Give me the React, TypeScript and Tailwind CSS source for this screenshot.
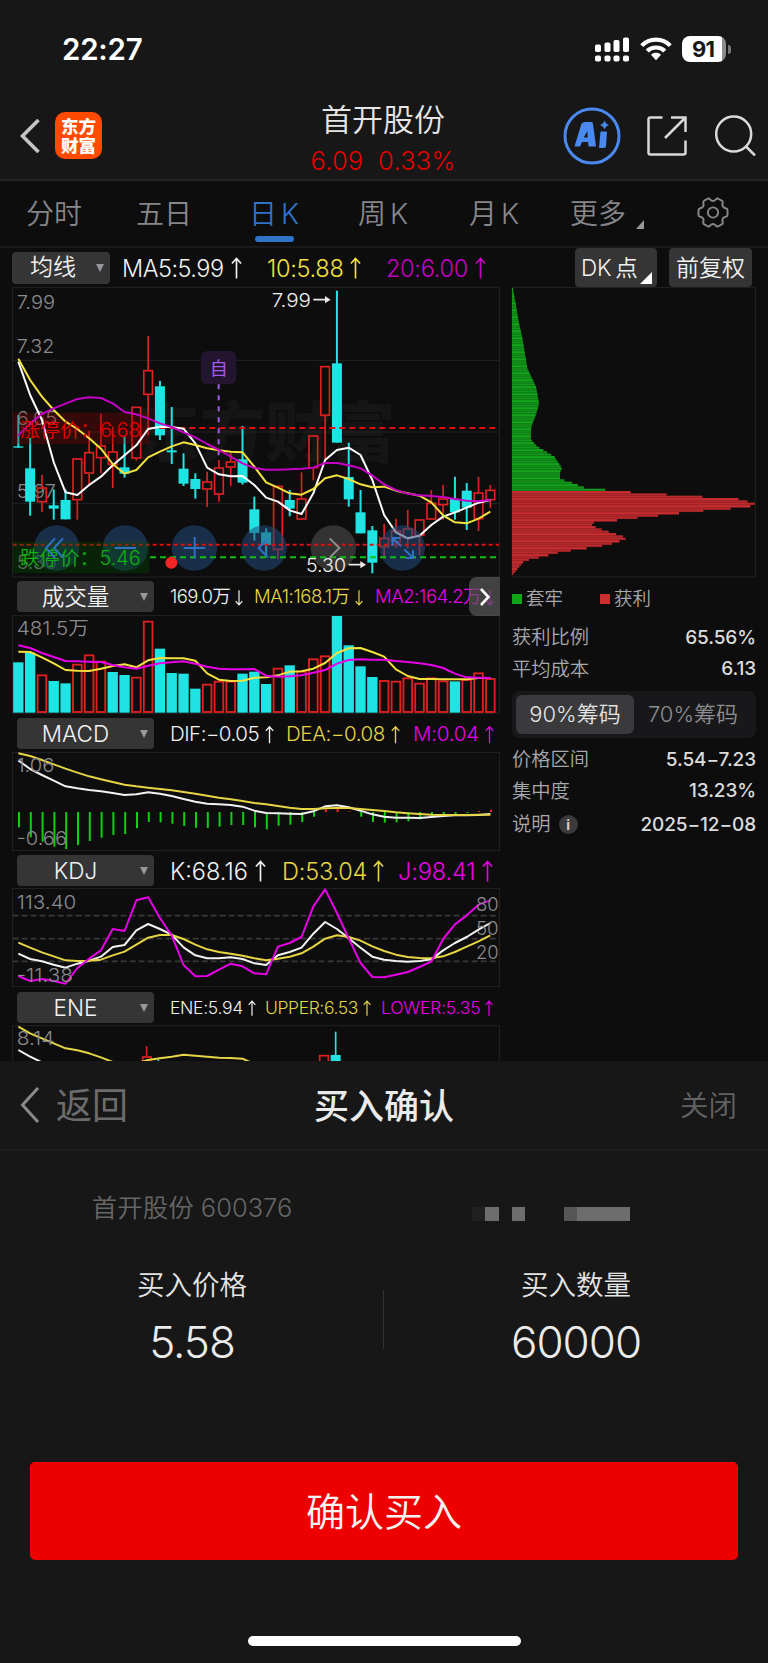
import React from "react";
import clsx from "clsx";

// chart drawings use three units per css pixel
const X0 = 55;
const STEP = 35.4;
const cx = (i: number) => X0 + i * STEP;

const CYAN = "#20e3e3";
const RED = "#e02020";
const WHITE = "#f2f2f2";
const YELLOW = "#f3e23f";
const MAGENTA = "#c400c4";
const PINK = "#e800e8";

type Candle = [string, number, number, number, number];

// direction, high, body top, body bottom, low
const candles: Candle[] = [
  ["c", 405, 499, 503, 503], ["c", 474, 565, 665, 707], ["r", 584, 622, 667, 697], ["c", 628, 676, 686, 719],
  ["c", 628, 660, 718, 718], ["r", 535, 535, 661, 719], ["r", 452, 516, 581, 612], ["r", 401, 496, 535, 580],
  ["r", 440, 514, 555, 624], ["c", 470, 562, 581, 593], ["r", 380, 380, 536, 542], ["r", 168, 270, 345, 466],
  ["c", 303, 319, 466, 480], ["c", 381, 511, 517, 552], ["c", 520, 566, 611, 618], ["c", 580, 597, 627, 656],
  ["r", 575, 604, 629, 681], ["r", 540, 562, 644, 665], ["r", 519, 544, 563, 618], ["c", 438, 538, 608, 614],
  ["c", 650, 688, 759, 782], ["c", 745, 757, 795, 830], ["r", 617, 617, 810, 838], ["c", 630, 660, 686, 709],
  ["r", 577, 655, 719, 719], ["r", 466, 466, 565, 601], ["r", 258, 258, 408, 540], ["c", 32, 250, 488, 488],
  ["c", 488, 591, 658, 680], ["c", 630, 697, 760, 760], ["c", 738, 751, 848, 880], ["r", 731, 773, 802, 835],
  ["r", 716, 752, 787, 805], ["r", 690, 745, 775, 805], ["r", 718, 718, 768, 825], ["r", 630, 668, 719, 719],
  ["r", 615, 655, 676, 719], ["c", 590, 657, 697, 719], ["c", 609, 632, 683, 750], ["r", 590, 637, 718, 753],
  ["r", 615, 629, 661, 684],
];

const ma5 = [245, 345, 420, 547, 637, 645, 615, 590, 556, 526, 496, 447, 440, 441, 446, 490, 563, 583, 589, 588, 615, 653, 665, 691, 702, 640, 540, 510, 503, 525, 600, 705, 757, 775, 767, 735, 710, 697, 683, 668, 660];
const ma10 = [236, 300, 350, 390, 425, 447, 475, 506, 552, 581, 570, 532, 515, 499, 487, 495, 505, 511, 515, 517, 560, 607, 623, 640, 644, 627, 595, 586, 597, 613, 622, 620, 632, 640, 647, 667, 706, 727, 730, 716, 695];
const ma20 = [466, 430, 402, 385, 371, 357, 352, 354, 370, 396, 403, 415, 430, 441, 457, 472, 492, 510, 530, 550, 564, 569, 569, 568, 566, 563, 549, 549, 556, 565, 587, 613, 630, 641, 646, 648, 651, 657, 662, 664, 660];

const volumes = [262, 233, 299, 318, 325, 267, 239, 258, 291, 300, 306, 138, 221, 294, 296, 341, 327, 318, 318, 296, 290, 327, 279, 271, 288, 251, 242, 123, 211, 274, 306, 316, 318, 308, 324, 308, 317, 319, 313, 293, 310];
const cyanVolumes = [0, 1, 3, 4, 8, 9, 12, 13, 14, 15, 19, 20, 21, 23, 27, 28, 29, 30, 37];
const volMa1 = [230, 231, 247, 265, 285, 287, 288, 281, 273, 268, 277, 256, 249, 250, 250, 257, 295, 314, 318, 317, 308, 307, 301, 290, 289, 281, 264, 234, 220, 219, 231, 245, 283, 303, 312, 312, 313, 313, 313, 309, 309];
const volMa2 = [211, 219, 234, 246, 258, 259, 260, 261, 270, 277, 281, 272, 265, 262, 259, 266, 275, 281, 283, 283, 282, 302, 305, 304, 301, 293, 285, 266, 255, 253, 254, 254, 258, 261, 265, 270, 279, 296, 307, 308, 309];

const macdBars = [757, 787, 800, 815, 822, 810, 798, 788, 780, 777, 760, 741, 742, 746, 753, 758, 759, 755, 750, 750, 757, 763, 752, 749, 741, 725, 703, 702, 709, 725, 741, 743, 742, 739, 733, 722, 720, 717, 714, 708, 704];
const dif = [556, 582, 600, 617, 634, 640, 645, 649, 654, 660, 658, 652, 656, 663, 672, 680, 686, 688, 690, 695, 707, 714, 715, 716, 717, 709, 694, 691, 697, 707, 718, 725, 728, 728, 729, 726, 723, 721, 721, 720, 717];
const dea = [535, 543, 555, 568, 581, 593, 604, 613, 621, 629, 634, 638, 642, 646, 651, 656, 662, 668, 673, 678, 684, 688, 693, 698, 702, 702, 700, 699, 699, 702, 705, 708, 712, 715, 717, 719, 720, 720, 720, 719, 719];

const kLine = [312, 328, 335, 345, 354, 342, 333, 321, 292, 286, 242, 223, 238, 255, 293, 317, 326, 326, 323, 328, 341, 346, 317, 307, 294, 252, 217, 238, 266, 294, 321, 330, 334, 336, 334, 329, 302, 280, 262, 240, 220];
const dLine = [279, 294, 308, 320, 332, 334, 333, 330, 317, 306, 285, 264, 256, 256, 268, 285, 299, 307, 312, 318, 326, 332, 327, 321, 311, 291, 267, 257, 262, 273, 290, 304, 315, 322, 325, 326, 320, 307, 291, 275, 257];
const jLine = [379, 394, 388, 394, 402, 355, 327, 302, 238, 244, 152, 143, 205, 258, 346, 380, 379, 360, 342, 350, 371, 374, 291, 280, 262, 170, 119, 190, 266, 340, 382, 383, 375, 367, 352, 336, 268, 224, 197, 165, 152];

// y, right edge
const chipShape = [
  [22, 38], [60, 45], [120, 55], [180, 68], [265, 82], [300, 98], [320, 108], [370, 117], [400, 109], [440, 94],
  [478, 92], [500, 112], [530, 163], [565, 186], [576, 180], [598, 180], [606, 210], [614, 230], [622, 247], [630, 320],
  [637, 397], [644, 507], [651, 615], [658, 723], [665, 744], [672, 766], [679, 750], [686, 687], [693, 604], [700, 532],
  [707, 470], [714, 408], [721, 347], [728, 277], [736, 275], [744, 292], [752, 315], [760, 340], [768, 366], [775, 380],
  [783, 360], [790, 338], [797, 310], [804, 263], [811, 215], [818, 175], [825, 147], [832, 118], [839, 88], [846, 70], [885, 37],
];

const chipEdge = (y: number) => {
  const n = chipShape.findIndex((p) => p[0] >= y);
  if (n <= 0) return chipShape[0][1];
  const [y0, x0] = chipShape[n - 1];
  const [y1, x1] = chipShape[n];
  return x0 + ((y - y0) / (y1 - y0)) * (x1 - x0);
};

const Line = ({ data, color, from = 0 }: { data: number[]; color: string; from?: number }) => (
  <polyline
    points={data.map((y, i) => `${cx(i + from)},${y}`).join(" ")}
    fill="none"
    stroke={color}
    strokeWidth={6}
    strokeLinejoin="round"
  />
);

const Label = ({ x, y, w, color = "#8a8a8e", size = 57, children }: { x: number; y: number; w: number; color?: string; size?: number; children: string }) => (
  <text x={x} y={y} textLength={w} lengthAdjust="spacingAndGlyphs" fontSize={size} fill={color}>
    {children}
  </text>
);

const Frame = ({ top, bottom }: { top: number; bottom: number }) => (
  <rect x={38} y={top} width={1460} height={bottom - top} fill="none" stroke="#232325" strokeWidth={3} />
);

const Arrow = ({ down = false, className }: { down?: boolean; className: string }) => (
  <svg viewBox="0 0 12 24" className={clsx("shrink-0", className)} fill="none" stroke="currentColor" strokeWidth={1.8}>
    <path d={down ? "M6 1V23M1 17.5L6 23L11 17.5" : "M6 23V1M1 6.5L6 1L11 6.5"} />
  </svg>
);

const Selector = ({ children }: { children: string }) => (
  <div className="relative ml-[5px] flex h-[31px] w-[137px] shrink-0 items-center justify-center rounded bg-[#353535] pt-px pr-[20px] text-[22.5px] text-[#f2f2f2]">
    {children}
    <svg viewBox="0 0 8 8" className="absolute top-[12px] right-[6px] h-2 w-2">
      <path d="M0 0H8L4 8Z" fill="#97979c" />
    </svg>
  </div>
);

const PriceChart = () => (
  <svg viewBox="36 18 1464 876" className="block h-[292px] w-[488px]">
    <text x={795} y={528} fontSize={196} fontWeight={900} fill="#151515" textAnchor="middle">
      东方财富
    </text>
    <Frame top={22} bottom={891} />
    {[241, 456, 671].map((y) => (
      <path key={y} d={`M38 ${y}H1498`} stroke="#232325" strokeWidth={3} />
    ))}
    <Label x={50} y={87} w={115}>7.99</Label>
    <Label x={50} y={220} w={113}>7.32</Label>
    <Label x={50} y={435} w={121}>6.65</Label>
    <Label x={50} y={653} w={117}>5.97</Label>
    <Label x={50} y={868} w={121}>5.30</Label>
    {candles.map(([dir, high, top, bottom, low], i) =>
      dir === "c" ? (
        <g key={i} fill={CYAN}>
          <rect x={cx(i) - 3} y={high} width={6} height={low - high} />
          <rect x={cx(i) - 15} y={top} width={30} height={bottom - top} />
        </g>
      ) : (
        <g key={i} fill="none" stroke={RED} strokeWidth={5}>
          <path d={`M${cx(i)} ${high}V${top}M${cx(i)} ${bottom}V${low}`} />
          <rect x={cx(i) - 13} y={top + 2} width={26} height={bottom - top - 4} />
        </g>
      )
    )}
    <rect x={603} y={213} width={106} height={100} rx={20} fill="#231530" />
    <text x={656} y={286} fontSize={54} fontWeight={400} fill="#a35af0" textAnchor="middle">自</text>
    <path d="M656 313V540" stroke="#a35af0" strokeWidth={6} strokeDasharray="15 18" />
    <rect x={38} y={398} width={410} height={94} fill="#8c0000" fillOpacity={0.3} />
    <path d="M448 444H1497" stroke="#e00f0f" strokeWidth={6} strokeDasharray="18 12" />
    <Line data={ma5} color="#ffffff" />
    <Line data={ma10} color={YELLOW} />
    <Line data={ma20} color={MAGENTA} />
    <g>
      {[170, 376, 583, 792, 1207].map((x) => (
        <circle key={x} cx={x} cy={804} r={68} fill="#244c7c" fillOpacity={0.55} />
      ))}
      <circle cx={1000} cy={804} r={68} fill="#5a5a5a" fillOpacity={0.5} />
    </g>
    <path d="M38 794H1497" stroke="#e00f0f" strokeWidth={6} strokeDasharray="12 9" />
    <rect x={38} y={785} width={410} height={94} fill="#004d00" fillOpacity={0.35} />
    <path d="M450 832H1497" stroke="#10c010" strokeWidth={6} strokeDasharray="18 12" />
    <Label x={60} y={470} w={362} color="#e60000" size={58}>涨停价：6.68</Label>
    <Label x={60} y={855} w={362} color="#10b010" size={58}>跌停价：5.46</Label>
    <g fill="none" stroke="#2f73c4" strokeWidth={6}>
      <path d="M165 775L138 804L165 833M189 775L162 804L189 833" />
      <path d="M344 804H408" />
      <path d="M551 804H616M584 771V836" />
      <path d="M804 776L776 804L804 832" />
      <path d="M1203 799L1178 774M1178 797V774H1201M1213 808L1239 834M1239 811V834H1216" />
    </g>
    <path d="M989 775L1018 804L989 833" fill="none" stroke="#8f8f8f" strokeWidth={6} />
    <circle cx={514} cy={848} r={18} fill="#f22424" />
    <Label x={815} y={80} w={118} color="#f0f0f0">7.99</Label>
    <Label x={918} y={877} w={120} color="#f0f0f0">5.30</Label>
    <path d="M940 59H978M1046 854H1084" stroke="#e8e8e8" strokeWidth={5} />
    <path d="M975 48L992 59L975 70ZM1081 843L1098 854L1081 865Z" fill="#e8e8e8" />
  </svg>
);

const VolumeChart = () => (
  <svg viewBox="36 120 1464 297" className="block h-[99px] w-[488px]">
    <Frame top={122} bottom={415} />
    <Label x={50} y={181} w={217}>481.5万</Label>
    {volumes.map((top, i) =>
      cyanVolumes.includes(i) ? (
        <rect key={i} x={cx(i) - 15.5} y={top} width={31} height={413 - top} fill={CYAN} />
      ) : (
        <rect key={i} x={cx(i) - 13} y={top + 2} width={26} height={409 - top} fill="none" stroke={RED} strokeWidth={5.5} />
      )
    )}
    <Line data={volMa1} color={YELLOW} />
    <Line data={volMa2} color={PINK} />
  </svg>
);

const MacdChart = () => (
  <svg viewBox="36 531 1464 297" className="block h-[99px] w-[488px]">
    <Frame top={533} bottom={826} />
    {macdBars.map((y, i) => (
      <path key={i} d={`M${cx(i) + 2} 711V${y}`} stroke={y < 711 ? "#ff2020" : "#10d010"} strokeWidth={6} />
    ))}
    <Line data={dif} color={WHITE} />
    <Line data={dea} color="#e6d545" />
    <Label x={50} y={590} w={113}>1.06</Label>
    <Label x={50} y={810} w={151}>-0.66</Label>
  </svg>
);

const KdjChart = () => (
  <svg viewBox="36 115 1464 297" className="block h-[99px] w-[488px]">
    <Frame top={117} bottom={411} />
    {[198, 267, 335].map((y) => (
      <path key={y} d={`M38 ${y}H1498`} stroke="#38383a" strokeWidth={5} strokeDasharray="18 9" />
    ))}
    <Line data={kLine} color={WHITE} />
    <Line data={dLine} color="#e6d545" />
    <Line data={jLine} color={PINK} />
    <Label x={50} y={177} w={179}>113.40</Label>
    <Label x={50} y={397} w={169}>-11.38</Label>
    <Label x={1428} y={185} w={68}>80</Label>
    <Label x={1428} y={257} w={68}>50</Label>
    <Label x={1428} y={327} w={68}>20</Label>
  </svg>
);

const EneChart = () => (
  <svg viewBox="36 525 1464 108" className="block h-[36px] w-[488px]">
    <Frame top={527} bottom={700} />
    <g fill="none" stroke={RED} strokeWidth={5}>
      <path d="M440 588V620" />
      <rect x={428} y={621} width={25} height={30} />
      <rect x={959} y={617} width={26} height={30} />
    </g>
    <path d="M1007 545V620" stroke={CYAN} strokeWidth={5} />
    <rect x={992} y={615} width={30} height={30} fill={CYAN} />
    <path d="M475 628V640" stroke={CYAN} strokeWidth={5} />
    <Line data={[530, 550, 565, 580, 595, 601, 610, 622, 636]} color="#e6d545" />
    <Line data={[640, 630, 625, 620, 614, 617, 620, 623, 624, 626, 642]} color="#e6d545" from={10} />
    <Line data={[600, 620, 637]} color={WHITE} />
    <Label x={50} y={584} w={113}>8.14</Label>
  </svg>
);

const ChipChart = () => {
  const rows = Array.from({ length: 123 }, (_, i) => 24 + i * 7);
  return (
    <svg viewBox="33 18 738 876" className="block h-[292px] w-[246px]">
      <rect x={36} y={22} width={730} height={869} fill="none" stroke="#232325" strokeWidth={3} />
      {rows.map((y, i) => {
        const w = chipEdge(y + 3.5) - 36;
        const red = y > 630;
        return (
          <g key={y}>
            <rect x={36} y={y} width={w} height={7.2} fill={red ? "#bd2a2d" : "#12981a"} />
            <rect x={36} y={y + 4} width={w} height={2.6} fill={red ? (i % 3 ? "#9a2426" : "#cf3033") : i % 3 ? "#127a16" : "#17ad1c"} />
          </g>
        );
      })}
    </svg>
  );
};

const Stat = ({ label, value, children }: { label: string; value: string; children?: React.ReactNode }) => (
  <div className="flex h-[31.5px] items-center justify-between">
    <span className="flex items-center text-[19.3px] text-[#a9a9ad]">
      {label}
      {children}
    </span>
    <span className="text-[19px] font-[450] tracking-[-0.1px] text-[#dcdcdc]">{value}</span>
  </div>
);

const StatusBar = () => (
  <div className="flex h-[90px] items-center pt-[8px] text-white">
    <span className="ml-[62px] w-[90px] text-[29.5px] font-semibold tracking-[-0.2px]">22:27</span>
    <svg viewBox="0 0 34 25" className="ml-[443px] h-[25px] w-[34px]" fill="currentColor">
      <rect x={0} y={7.5} width={6} height={7.5} rx={1.8} />
      <rect x={9.5} y={5.5} width={6} height={9.5} rx={1.8} />
      <rect x={18.5} y={3} width={6} height={12} rx={1.8} />
      <rect x={28} y={0.5} width={6} height={14.5} rx={1.8} />
      {[0, 9.5, 18.5, 28].map((x) => (
        <rect key={x} x={x} y={18.5} width={6} height={6} rx={1.8} />
      ))}
    </svg>
    <svg viewBox="0 0 32 24" className="ml-[11px] h-[24px] w-[32px]" fill="none" stroke="currentColor" strokeWidth={4.2}>
      <path d="M1.7 8.6C9.5 0.5 22.5 0.5 30.3 8.6" />
      <path d="M7.2 14C12 9.3 20 9.3 24.8 14" />
      <path d="M11 17.8C13.8 15.2 18.2 15.2 21 17.8L16 23.2Z" fill="currentColor" stroke="none" />
    </svg>
    <div className="ml-[10px] flex h-[26px] w-[44px] items-center justify-center rounded-[8px] bg-linear-to-r from-white from-90% to-[#8c8c8c] to-90% pr-[2px] text-[22px] font-bold tracking-[-0.8px] text-[#171717]">
      91
    </div>
    <div className="ml-[2px] h-[9px] w-[3px] rounded-r-full bg-[#777]" />
  </div>
);

const Header = () => (
  <div className="flex h-[91px] items-start border-b-2 border-[#242424]">
    <svg viewBox="0 0 20 34" className="mt-[29px] ml-[20px] h-[34px] w-[20px]" fill="none" stroke="#c4c4c4" strokeWidth={3.6}>
      <path d="M18.5 1L2.5 17L18.5 33" />
    </svg>
    <div className="mt-[22px] ml-[15px] flex h-[47px] w-[47px] flex-col items-center justify-center rounded-[10px] bg-[#ff4a00] text-[17.5px] leading-[19px] font-black text-white">
      <span>东方</span>
      <span>财富</span>
    </div>
    <div className="ml-[181px] flex w-[200px] flex-col items-center">
      <span className="mt-[8px] text-[31px] leading-[44px] text-[#e6e6e6]">首开股份</span>
      <span className="mt-[3px] text-[25.5px] leading-[32px] tracking-[0.2px] whitespace-pre text-[#e60000]">6.09  0.33%</span>
    </div>
    <svg viewBox="0 0 58 58" className="mt-[17px] ml-[80px] h-[58px] w-[58px] shrink-0">
      <circle cx={29} cy={29} r={27} fill="none" stroke="#4a8af0" strokeWidth={3} />
      <path fillRule="evenodd" d="M18.5 16.5Q20 15 22 15H28Q30 15 30 17L33 39.5H25.5L25 35H19L17 39.5H11.5Z M24.3 24L20.8 30.5H24.7Z" fill="#4a8af0" />
      <path d="M37.5 24.5H44L43 39Q42.8 41 41 41H36ZM41.5 13.5Q42.5 17 46 18Q42.5 19 41.5 22.5Q40.5 19 37 18Q40.5 17 41.5 13.5Z" fill="#4a8af0" />
    </svg>
    <svg viewBox="0 0 40 40" className="mt-[26px] ml-[26px] h-[40px] w-[40px] shrink-0" fill="none" stroke="#d9d9d9" strokeWidth={2.5}>
      <path d="M15.5 1.5H3.5Q1.5 1.5 1.5 3.5V36.5Q1.5 38.5 3.5 38.5H36.5Q38.5 38.5 38.5 36.5V24.5" />
      <path d="M24 1.5H38.5V16M38.5 1.5L18 22" />
    </svg>
    <svg viewBox="0 0 41 41" className="mt-[25px] ml-[28px] h-[41px] w-[41px] shrink-0" fill="none" stroke="#d9d9d9" strokeWidth={2.5}>
      <circle cx={18.7} cy={19} r={17.5} />
      <path d="M30.5 31L40 40.5" />
    </svg>
  </div>
);

const Tabs = () => (
  <div className="flex h-[67px] items-start border-b-2 border-[#191919] pt-[12px] text-[28px] leading-[42px] text-[#87878b]">
    <span className="ml-[26px] w-[110px]">分时</span>
    <span className="w-[111px]">五日</span>
    <div className="w-[111px] text-[#2f74c6]">
      <span className="ml-[2px] flex gap-[4px]"><span>日</span><span>K</span></span>
      <div className="mt-px ml-[8px] h-[6px] w-[39px] rounded-full bg-[#2f74c6]" />
    </div>
    <span className="flex w-[111px] gap-[4px]"><span>周</span><span>K</span></span>
    <span className="flex w-[101px] gap-[4px]"><span>月</span><span>K</span></span>
    <span className="w-[66px]">更多</span>
    <svg viewBox="0 0 8 9" className="mt-[27px] h-[9px] w-[8px]">
      <path d="M8 0V9H0Z" fill="#97979b" />
    </svg>
    <svg viewBox="0 0 32 32" className="mt-[4px] ml-[53px] h-[31px] w-[32px]" fill="none" stroke="#87878b" strokeWidth={2}>
      <circle cx={16} cy={16} r={5.3} />
      <path strokeLinejoin="round" d="M10.5 1.8Q12 1.2 13 2.5Q14.4 4.2 16 4.2Q17.6 4.2 19 2.5Q20 1.2 21.5 1.8L25 3.7Q26.4 4.7 26 6.2Q25.4 8.5 26.2 9.8Q27.1 11.3 29.2 11.6Q31 12 31 13.7V18.3Q31 20 29.2 20.4Q27.1 20.7 26.2 22.2Q25.4 23.5 26 25.8Q26.4 27.3 25 28.3L21.5 30.2Q20 30.8 19 29.5Q17.6 27.8 16 27.8Q14.4 27.8 13 29.5Q12 30.8 10.5 30.2L7 28.3Q5.6 27.3 6 25.8Q6.6 23.5 5.8 22.2Q4.9 20.7 2.8 20.4Q1 20 1 18.3V13.7Q1 12 2.8 11.6Q4.9 11.3 5.8 9.8Q6.6 8.5 6 6.2Q5.6 4.7 7 3.7Z" />
    </svg>
  </div>
);

const MaRow = () => (
  <div className="-mb-px flex h-[39px] items-center text-[23.5px] whitespace-nowrap">
    <div className="relative ml-[12px] flex h-[32px] w-[98px] shrink-0 items-center rounded bg-[#353535] pl-[18px] text-[23px] text-[#f2f2f2]">
      均线
      <svg viewBox="0 0 8 8" className="absolute top-[12px] right-[6px] h-2 w-2">
        <path d="M0 0H8L4 8Z" fill="#97979c" />
      </svg>
    </div>
    <div className="ml-[12px] flex w-[145px] shrink-0 items-center gap-[7px] pt-[2px] text-[#f2f2f2]">
      <span className="tracking-[-0.5px]">MA5:5.99</span>
      <Arrow className="h-[23px] w-[11px]" />
    </div>
    <div className="flex w-[119px] shrink-0 items-center gap-[7px] pt-[2px] text-[#f3e23f]">
      <span className="tracking-[-0.3px]">10:5.88</span>
      <Arrow className="h-[23px] w-[11px]" />
    </div>
    <div className="flex w-[189px] shrink-0 items-center gap-[7px] pt-[2px] text-[#c400c4]">
      <span className="tracking-[-0.3px]">20:6.00</span>
      <Arrow className="h-[23px] w-[11px]" />
    </div>
    <div className="relative flex h-[39px] w-[82px] shrink-0 items-center gap-[4px] rounded bg-[#353535] pt-px pl-[6px] text-[22.5px] text-[#f2f2f2]">
      <span className="tracking-[-0.3px]">DK</span>
      <span>点</span>
      <svg viewBox="0 0 12 12" className="absolute right-[5px] bottom-[3px] h-3 w-3">
        <path d="M12 0V12H0Z" fill="#fff" />
      </svg>
    </div>
    <div className="ml-[12px] flex h-[39px] w-[83px] shrink-0 items-center justify-center rounded bg-[#353535] pt-px text-[23px] text-[#f2f2f2]">
      前复权
    </div>
  </div>
);

const Charts = () => (
  <div className="ml-[12px] w-[488px] shrink-0">
    <PriceChart />
    <div className="relative mt-[3px] flex h-[31px] items-center text-[18.5px] whitespace-nowrap">
      <Selector>成交量</Selector>
      <div className="ml-[16px] flex w-[84px] shrink-0 items-center gap-[5px] pt-px text-[#f2f2f2]">
        <span className="tracking-[-0.6px]">169.0万</span>
        <Arrow down className="h-[17px] w-[8px]" />
      </div>
      <div className="flex w-[121px] shrink-0 items-center gap-[5px] pt-px text-[#e6d545]">
        <span className="tracking-[-0.4px]">MA1:168.1万</span>
        <Arrow down className="h-[17px] w-[8px]" />
      </div>
      <div className="flex items-center gap-[5px] pt-px text-[#e800e8]">
        <span className="tracking-[-0.4px]">MA2:164.2万</span>
        <Arrow down className="h-[17px] w-[8px]" />
      </div>
      <div className="absolute top-[-4px] right-0 flex h-[39px] w-[31px] items-center justify-center rounded-l-lg bg-[#5a5a5a]/70">
        <svg viewBox="0 0 10 18" className="h-[18px] w-[10px]" fill="none" stroke="#fff" strokeWidth={2.6}>
          <path d="M1 1L8.5 9L1 17" />
        </svg>
      </div>
    </div>
    <div className="mt-[3px]"><VolumeChart /></div>
    <div className="mt-[4px] flex h-[31px] items-center text-[20.5px] whitespace-nowrap">
      <Selector>MACD</Selector>
      <div className="ml-[16px] flex w-[116px] shrink-0 items-center gap-[6px] pt-[2px] text-[#f2f2f2]">
        <span className="tracking-[-0.5px]">DIF:−0.05</span>
        <Arrow className="h-[20px] w-[9px]" />
      </div>
      <div className="flex w-[127px] shrink-0 items-center gap-[6px] pt-[2px] text-[#e6d545]">
        <span className="tracking-[-0.4px]">DEA:−0.08</span>
        <Arrow className="h-[20px] w-[9px]" />
      </div>
      <div className="flex items-center gap-[6px] pt-[2px] text-[#e800e8]">
        <span className="tracking-[-0.2px]">M:0.04</span>
        <Arrow className="h-[20px] w-[9px]" />
      </div>
    </div>
    <div className="mt-[3px]"><MacdChart /></div>
    <div className="mt-[4px] flex h-[31px] items-center text-[23.5px] whitespace-nowrap">
      <Selector>KDJ</Selector>
      <div className="ml-[16px] flex w-[112px] shrink-0 items-center gap-[7px] pt-[2px] text-[#f2f2f2]">
        <span>K:68.16</span>
        <Arrow className="h-[23px] w-[11px]" />
      </div>
      <div className="flex w-[116px] shrink-0 items-center gap-[6px] pt-[2px] text-[#e6d545]">
        <span className="tracking-[-0.2px]">D:53.04</span>
        <Arrow className="h-[23px] w-[11px]" />
      </div>
      <div className="flex items-center gap-[6px] pt-[2px] text-[#e800e8]">
        <span className="tracking-[-0.1px]">J:98.41</span>
        <Arrow className="h-[23px] w-[11px]" />
      </div>
    </div>
    <div className="mt-[2px]"><KdjChart /></div>
    <div className="mt-[5px] flex h-[31px] items-center text-[17.5px] whitespace-nowrap">
      <Selector>ENE</Selector>
      <div className="ml-[16px] flex w-[95px] shrink-0 items-center gap-[5px] pt-[2px] text-[#f2f2f2]">
        <span className="tracking-[-0.3px]">ENE:5.94</span>
        <Arrow className="h-[17px] w-[8px]" />
      </div>
      <div className="flex w-[116px] shrink-0 items-center gap-[5px] pt-[2px] text-[#e6d545]">
        <span className="tracking-[-0.4px]">UPPER:6.53</span>
        <Arrow className="h-[17px] w-[8px]" />
      </div>
      <div className="flex items-center gap-[5px] pt-[2px] text-[#e800e8]">
        <span className="tracking-[-0.2px]">LOWER:5.35</span>
        <Arrow className="h-[17px] w-[8px]" />
      </div>
    </div>
    <div className="mt-[2px]"><EneChart /></div>
  </div>
);

const ChipPanel = () => (
  <div className="ml-[11px] w-[246px] shrink-0">
    <ChipChart />
    <div className="mr-[1px] ml-[1px]">
      <div className="mt-[5px] flex h-[31px] items-center text-[18.5px] text-[#a9a9ad]">
        <span className="mr-[4px] h-[10px] w-[10px] bg-[#12a418]" />
        套牢
        <span className="mr-[4px] ml-[37px] h-[10px] w-[10px] bg-[#cc2f32]" />
        获利
      </div>
      <div className="mt-[8px]">
        <Stat label="获利比例" value="65.56%" />
        <Stat label="平均成本" value="6.13" />
      </div>
      <div className="mt-[6px] flex h-[47px] items-center rounded-lg bg-[#18181a] px-[4px] text-[22px]">
        <div className="flex h-[39px] w-[118px] items-center justify-center rounded-md bg-[#3a3a3c] whitespace-nowrap text-[#e4e4e4]">90%筹码</div>
        <div className="flex flex-1 items-center justify-center whitespace-nowrap text-[#8e8e92]">70%筹码</div>
      </div>
      <div className="mt-[6px]">
        <Stat label="价格区间" value="5.54−7.23" />
        <Stat label="集中度" value="13.23%" />
        <div className="pt-[2px]">
          <Stat label="说明" value="2025−12−08">
            <span className="ml-[8px] flex h-[19px] w-[19px] items-center justify-center rounded-full bg-[#3a3a3c] text-[14px] font-bold text-[#d0d0d0]">i</span>
          </Stat>
        </div>
      </div>
    </div>
  </div>
);

const ConfirmSheet = () => (
  <div className="h-[602px] bg-[#171717]">
    <div className="flex h-[89px] items-center border-b border-[#212121]">
      <svg viewBox="0 0 20 36" className="ml-[20px] h-[36px] w-[20px]" fill="none" stroke="#8a8a8a" strokeWidth={3}>
        <path d="M18 1L2.5 18L18 35" />
      </svg>
      <span className="ml-[16px] w-[258px] pt-[2px] text-[36px] font-normal text-[#6c6c6c]">返回</span>
      <span className="w-[366px] pt-[3px] text-[35px] font-medium text-[#ebebeb]">买入确认</span>
      <span className="pt-[2px] text-[28.5px] text-[#626262]">关闭</span>
    </div>
    <div className="flex h-[118px] items-center">
      <div className="w-[384px] pb-[2px] text-center text-[25.5px] text-[#666]">首开股份 600376</div>
      <div className="mt-[10px] flex h-[14px]">
        <div className="ml-[88px] w-[13px] bg-[#202020]" />
        <div className="w-[14px] bg-[#6d6d6d]" />
        <div className="ml-[13px] w-[13px] bg-[#6d6d6d]" />
        <div className="ml-[39px] w-[13px] bg-[#565656]" />
        <div className="w-[53px] bg-[#6d6d6d]" />
      </div>
    </div>
    <div className="flex">
      <div className="flex w-[384px] flex-col items-center">
        <span className="mt-px text-[27.5px] leading-[32px] text-[#e4e4e4]">买入价格</span>
        <span className="mt-[16px] text-[44px] leading-[50px] tracking-[-1px] text-[#ebebeb]">5.58</span>
      </div>
      <div className="mt-[22px] -ml-px h-[59px] w-px bg-[#333]" />
      <div className="flex w-[384px] flex-col items-center">
        <span className="mt-px text-[27.5px] leading-[32px] text-[#e4e4e4]">买入数量</span>
        <span className="mt-[16px] text-[44px] leading-[50px] tracking-[-1px] text-[#ebebeb]">60000</span>
      </div>
    </div>
    <div className="mx-[30px] mt-[95px] flex h-[98px] items-center justify-center rounded-[5px] bg-[#ee0000] pt-[2px] text-[39px] text-[#f3f3f3]">
      确认买入
    </div>
    <div className="mx-auto mt-[76px] h-[10px] w-[273px] rounded-full bg-white" />
  </div>
);

export default function App() {
  return (
    <div className="h-[1663px] w-[768px] overflow-hidden bg-[#0d0d0d] font-['Inter','Noto_Sans_CJK_SC',sans-serif] font-[350]">
      <div className="bg-[#171717]">
        <StatusBar />
        <Header />
      </div>
      <Tabs />
      <MaRow />
      <div className="flex h-[775px] overflow-hidden">
        <Charts />
        <ChipPanel />
      </div>
      <ConfirmSheet />
    </div>
  );
}
